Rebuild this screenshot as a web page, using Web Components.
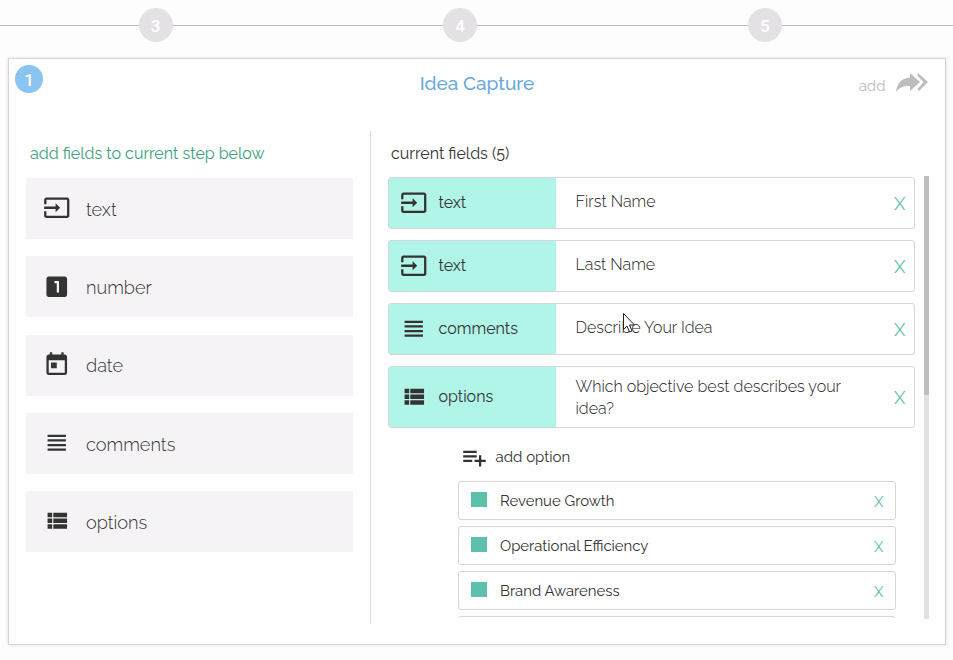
<!DOCTYPE html>
<html lang="en">
<head>
<meta charset="utf-8">
<title>Idea Capture</title>
<style>
  body {
    margin: 0;
    width: 953px;
    height: 660px;
    overflow: hidden;
    background: #fdfdfd;
    font-family: Raleway, Lato, "Open Sans", sans-serif;
    color: #333;
  }
</style>
</head>
<body>
<idea-app></idea-app>

<script>
const ICONS = {
  text: 'M21 3.01H3c-1.1 0-2 .9-2 2V9h2V4.99h18v14.03H3V15H1v4.01c0 1.1.9 1.98 2 1.98h18c1.1 0 2-.88 2-1.98v-14c0-1.11-.9-2-2-2zM11 16l4-4-4-4v3H1v2h10v3z',
  number: 'M19 3H5c-1.1 0-2 .9-2 2v14c0 1.1.9 2 2 2h14c1.1 0 2-.9 2-2V5c0-1.1-.9-2-2-2zm-5 14h-2V9h-2V7h4v10z',
  date: 'M19 3h-1V1h-2v2H8V1H6v2H5c-1.11 0-1.99.9-1.99 2L3 19c0 1.1.89 2 2 2h14c1.1 0 2-.9 2-2V5c0-1.1-.9-2-2-2zm0 16H5V8h14v11zM7 10h5v5H7z',
  comments: 'M4 15h16v-2H4v2zm0 4h16v-2H4v2zm0-8h16V9H4v2zm0-6v2h16V5H4z',
  options: 'M4 14h4v-4H4v4zm0 5h4v-4H4v4zM4 9h4V5H4v4zm5 5h12v-4H9v4zm0 5h12v-4H9v4zM9 5v4h12V5H9z',
  add: 'M14 10H2v2h12v-2zm0-4H2v2h12V6zm4 8v-4h-2v4h-4v2h4v4h2v-4h4v-2h-4zM2 16h8v-2H2v2z',
};

const define = (name, html) => {
  customElements.define(name, class extends HTMLElement {
    connectedCallback() {
      if (this.shadowRoot) return;
      this.attachShadow({mode: 'open'}).innerHTML = typeof html === 'function' ? html(this) : html;
    }
  });
};

define('field-icon', (el) => `
<style>
  :host { display: block; flex: none; width: 27.5px; height: 27.5px; }
  svg { display: block; width: 100%; height: 100%; fill: #333; }
</style>
<svg viewBox="0 0 24 24"><path d="${ICONS[el.getAttribute('name')]}"/></svg>
`);

define('step-badge', `
<style>
  :host {
    display: flex;
    flex: none;
    box-sizing: border-box;
    align-items: center;
    justify-content: center;
    width: 34px;
    height: 34px;
    padding-top: 2px;
    border-radius: 50%;
    background: #e3e1e4;
    color: #fff;
    font: 500 17px Roboto, sans-serif;
  }
  :host([active]) {
    width: 28px;
    height: 28px;
    background: #8ac4f1;
  }
</style>
<slot></slot>
`);

define('step-line', `
<style>
  :host {
    display: flex;
    box-sizing: border-box;
    height: 50px;
    padding-left: 138.5px;
    align-items: center;
    gap: 270.7px;
    background: linear-gradient(#bdbcbf, #bdbcbf) 0 25px / 100% 1px no-repeat;
  }
</style>
<step-badge>3</step-badge>
<step-badge>4</step-badge>
<step-badge>5</step-badge>
`);

define('field-type', (el) => `
<style>
  :host {
    display: flex;
    box-sizing: border-box;
    height: 61px;
    padding-left: 17.3px;
    align-items: center;
    background: #f5f3f6;
    font-size: 18.2px;
    font-weight: 300;
  }
  field-icon { margin-bottom: 1px; }
  span { margin-left: 15.2px; padding-top: 1.6px; }
</style>
<field-icon name="${el.getAttribute('type')}"></field-icon>
<span>${el.getAttribute('type')}</span>
`);

define('current-field', (el) => `
<style>
  :host {
    display: flex;
    box-sizing: border-box;
    height: 52px;
    border: 1px solid #d6d5d8;
    border-radius: 3px;
    background: #fefefe;
    overflow: hidden;
  }
  :host([tall]) { height: 62px; }
  .type {
    display: flex;
    flex: none;
    width: 156.5px;
    padding: 0 0 1px 10.5px;
    align-items: center;
    background: #b0f5e8;
    font-size: 16px;
  }
  .type span { margin: 0 0 1px 11.5px; }
  .label {
    flex: 1;
    padding: 13px 0 0 19.5px;
    color: #222;
    font-size: 16px;
    font-weight: 300;
    line-height: 22px;
    white-space: pre-line;
  }
  :host([tall]) .label { padding-top: 9px; }
  .remove {
    align-self: center;
    padding-right: 8.5px;
    color: #5cc0ab;
    font-size: 18px;
  }
</style>
<div class="type">
  <field-icon name="${el.getAttribute('type')}"></field-icon>
  <span>${el.getAttribute('type')}</span>
</div>
<div class="label"><slot></slot></div>
<div class="remove">X</div>
`);

define('option-row', `
<style>
  :host {
    display: flex;
    flex: none;
    box-sizing: border-box;
    height: 39px;
    padding: 0 11.5px 0 12px;
    align-items: center;
    border: 1px solid #d6d5d8;
    border-radius: 3px;
    font-size: 14.9px;
  }
  i { width: 16px; height: 15px; margin: 0 13px 3px 0; background: #5cc0ab; }
  .remove { margin-left: auto; padding-top: 2px; color: #5cc0ab; }
  :host(:empty) i, :host(:empty) .remove { display: none; }
</style>
<i></i>
<slot></slot>
<span class="remove">X</span>
`);

define('scroll-bar', `
<style>
  :host { display: block; width: 5px; height: 443px; background: #e3e1e4; }
  div { height: 219px; background: #bfbdc1; }
</style>
<div></div>
`);

define('add-button', `
<style>
  :host { display: flex; align-items: flex-start; gap: 10.5px; color: #bfbcc0; font-size: 15px; }
  span { padding-top: 4px; }
  svg { display: block; width: 33px; height: 20px; }
</style>
<span>add</span>
<svg viewBox="0 0 33 20">
  <path fill="#bfbcc0" d="M0 19C1 10 6 5 14 4.500V0L24 9L14 18V13C8 12.500 4 14 0 19Z"/>
  <path fill="#bfbcc0" d="M22 0L32 9L23 18L21.500 16L27.500 9L21.500 3Z"/>
</svg>
`);

define('idea-app', `
<style>
  :host { display: block; }
  .card {
    display: flex;
    flex-direction: column;
    box-sizing: border-box;
    width: 938px;
    height: 587px;
    margin: 8px 0 0 8px;
    border: 1px solid #d6d4d8;
    background: #fefefe;
    box-shadow: 0 0 3px #dddbe0;
  }
  header {
    display: grid;
    grid-template-columns: 200px 1fr 200px;
    height: 72px;
    flex: none;
  }
  header step-badge { margin: 6px 0 0 6px; }
  h1 {
    margin: 13px 0 0;
    justify-self: center;
    font-size: 19px;
    font-weight: 500;
    color: #67aade;
  }
  add-button { justify-self: end; margin: 14px 16px 0 0; }
  main { display: flex; height: 493px; }
  .available {
    box-sizing: border-box;
    width: 362px;
    padding: 13px 17px 0;
    border-right: 1px solid #dcdadd;
  }
  .current { width: 527px; margin-left: 17px; padding-top: 13px; }
  h2 { height: 20px; margin: 0; font-size: 16px; font-weight: 400; line-height: 20px; }
  .available h2 { margin: 0 0 14px 4px; color: #40a07b; }
  .current h2 { margin: 0 0 13px 3px; }
  .types { display: flex; flex-direction: column; gap: 17.25px; }
  .fields { display: flex; flex-direction: column; gap: 11px; height: 441px; overflow: hidden; }
  .fields > * { flex: none; }
  .options { display: flex; flex-direction: column; gap: 6px; width: 438px; margin-left: 70px; }
  .add-option { display: flex; align-items: center; height: 27px; margin: 4px 0 5px 3px; font-size: 15px; }
  .add-option field-icon { width: 27px; height: 27px; margin: 1px 7.5px 0 0; }
  scroll-bar { margin: 45px 0 0 9px; }
  .pointer { position: absolute; left: 622px; top: 312px; width: 14px; height: 22px; }
</style>
<step-line></step-line>
<section class="card">
  <header>
    <step-badge active>1</step-badge>
    <h1>Idea Capture</h1>
    <add-button></add-button>
  </header>
  <main>
    <div class="available">
      <h2>add fields to current step below</h2>
      <div class="types">
        <field-type type="text"></field-type>
        <field-type type="number"></field-type>
        <field-type type="date"></field-type>
        <field-type type="comments"></field-type>
        <field-type type="options"></field-type>
      </div>
    </div>
    <div class="current">
      <h2>current fields (5)</h2>
      <div class="fields">
        <current-field type="text">First Name</current-field>
        <current-field type="text">Last Name</current-field>
        <current-field type="comments">Describe Your Idea</current-field>
        <current-field type="options" tall>Which objective best describes your
idea?</current-field>
        <div class="options">
          <div class="add-option"><field-icon name="add"></field-icon>add option</div>
          <option-row>Revenue Growth</option-row>
          <option-row>Operational Efficiency</option-row>
          <option-row>Brand Awareness</option-row>
          <option-row></option-row>
        </div>
      </div>
    </div>
    <scroll-bar></scroll-bar>
  </main>
</section>
<svg class="pointer" viewBox="0 0 14 22">
  <path d="M1.500 1.500V17.500L5 14L7.500 20L10 19L7.500 13H12.500Z" fill="#fff" stroke="#222"/>
</svg>
`);
</script>
</body>
</html>
